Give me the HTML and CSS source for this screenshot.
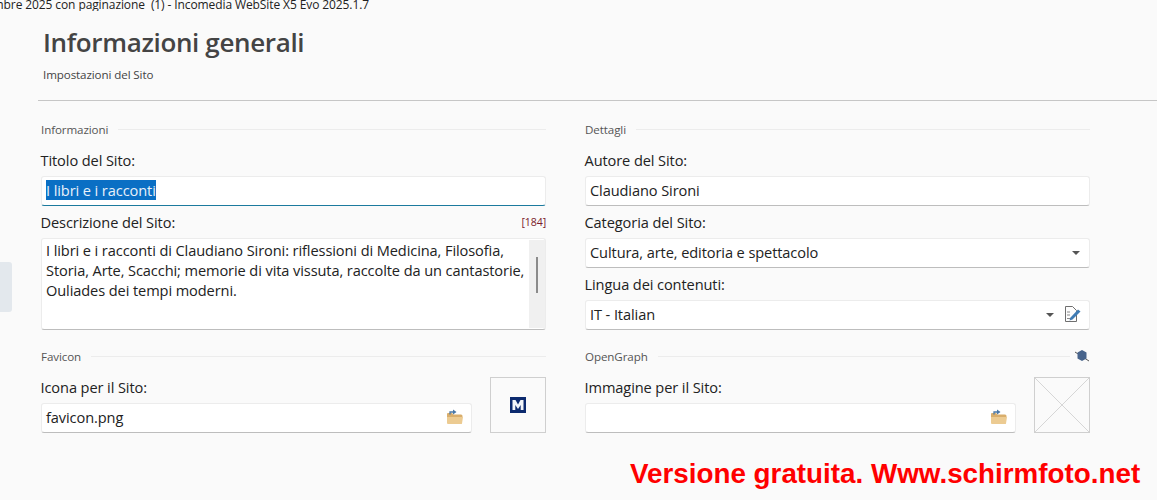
FILE: index.html
```html
<!DOCTYPE html>
<html lang="it">
<head>
<meta charset="utf-8">
<title>Informazioni generali</title>
<link rel="stylesheet" href="styles.css">
</head>
<body>
<div class="window-title"><span>Settembre 2025 con paginazione  (1) - Incomedia WebSite X5 Evo 2025.1.7</span></div>
<div class="side-tab"></div>
<header class="page-head">
  <h1>Informazioni generali</h1>
  <p>Impostazioni del Sito</p>
</header>
<main class="columns">
  <section class="column">
    <div class="group-head"><span>Informazioni</span><i></i></div>
    <div class="label label-first">Titolo del Sito:</div>
    <div class="field field-focus"><mark>I libri e i racconti</mark></div>
    <div class="label label-row"><span>Descrizione del Sito:</span><span class="counter">[184]</span></div>
    <div class="textarea">
      <div class="textarea-text">I libri e i racconti di Claudiano Sironi: riflessioni di Medicina, Filosofia,<br>Storia, Arte, Scacchi; memorie di vita vissuta, raccolte da un cantastorie,<br>Ouliades dei tempi moderni.</div>
      <div class="scrollbar"><b></b></div>
    </div>
    <div class="group-head group-second"><span>Favicon</span><i></i></div>
    <div class="picker">
      <div class="picker-main">
        <div class="label">Icona per il Sito:</div>
        <div class="field"><span class="grow">favicon.png</span>
          <svg class="folder" width="18" height="16" viewBox="0 0 18 16"><path d="M1 5q0-1 1-1h4l1.500 1.500H15q1.500 0 1.500 1.500v1H1z" fill="#d9ae6c"/><path d="M1 8h16l-1 6.500q0 .5-1 .5H2q-1 0-1-1z" fill="#eccb92"/><path d="M4 5.500V3h4" fill="none" stroke="#4a78a8" stroke-width="1.300"/><path d="M7 .5l3.500 2.500L7 5.500z" fill="#4a78a8"/></svg>
        </div>
      </div>
      <div class="preview">
        <svg width="16" height="16" viewBox="0 0 16 16"><rect width="16" height="16" fill="#0c2a6e"/><path d="M2.500 13V3h3L8 7.500 10.500 3h3v10h-2.800V8L8 12 5.300 8v5z" fill="#f3f5f8"/></svg>
      </div>
    </div>
  </section>
  <section class="column">
    <div class="group-head"><span>Dettagli</span><i></i></div>
    <div class="label label-first">Autore del Sito:</div>
    <div class="field">Claudiano Sironi</div>
    <div class="label label-row">Categoria del Sito:</div>
    <div class="field"><span class="grow">Cultura, arte, editoria e spettacolo</span><span class="caret caret-end"></span></div>
    <div class="label label-row">Lingua dei contenuti:</div>
    <div class="field"><span class="grow">IT - Italian</span><span class="caret"></span>
      <svg class="edit" width="18" height="18" viewBox="0 0 18 18"><path d="M1.500 1.500h7l4 4v11h-11z" fill="#fdfdfd" stroke="#6f6f6f"/><path d="M3 7h3M3 10h3M3 13.500h5" stroke="#8a8a8a"/><path d="M6.500 12.500l7.500-8 2.500 2-8 8-3 1z" fill="#3f7cb5"/></svg>
    </div>
    <div class="group-head group-second"><span>OpenGraph</span><i></i>
      <svg class="graph" width="16" height="14" viewBox="0 0 16 14"><path d="M1 3l14 9" stroke="#555" stroke-width="1"/><path d="M3.500 3.500L8 1l4.500 2.500v6L8 12 3.500 9.500z" fill="#48648c"/></svg>
    </div>
    <div class="picker">
      <div class="picker-main">
        <div class="label">Immagine per il Sito:</div>
        <div class="field"><span class="grow"></span>
          <svg class="folder" width="18" height="16" viewBox="0 0 18 16"><path d="M1 5q0-1 1-1h4l1.500 1.500H15q1.500 0 1.500 1.500v1H1z" fill="#d9ae6c"/><path d="M1 8h16l-1 6.500q0 .5-1 .5H2q-1 0-1-1z" fill="#eccb92"/><path d="M4 5.500V3h4" fill="none" stroke="#4a78a8" stroke-width="1.300"/><path d="M7 .5l3.500 2.500L7 5.500z" fill="#4a78a8"/></svg>
        </div>
      </div>
      <div class="preview preview-empty">
        <svg width="54" height="54" viewBox="0 0 54 54"><path d="M0 0l54 54M54 0L0 54" stroke="#d6d6d6"/></svg>
      </div>
    </div>
  </section>
</main>
<div class="watermark">Versione gratuita. Www.schirmfoto.net</div>
</body>
</html>
```
FILE: styles.css
```css
* { box-sizing: border-box; }
html, body { margin: 0; height: 500px; overflow: hidden; }
body {
  position: relative;
  background: #fafafa;
  color: #222;
  font-family: "Open Sans", "Noto Sans", sans-serif;
  font-size: 14.6px;
  letter-spacing: -0.1px;
}
.window-title {
  display: flex;
  justify-content: flex-end;
  width: 369px;
  height: 12px;
  line-height: 12px;
  margin-top: -1px;
  font-size: 12px;
  color: #222;
  white-space: pre;
  overflow: hidden;
}
.side-tab {
  position: absolute;
  left: 0;
  top: 262px;
  width: 12px;
  height: 50px;
  background: #e3e8ed;
  border-radius: 0 3px 3px 0;
}
.page-head {
  margin: 0 0 0 38px;
  padding: 13px 0 0 5px;
  height: 90px;
  border-bottom: 1px solid #c6c6c6;
}
.page-head h1 {
  margin: 0;
  font-size: 26px;
  line-height: 36px;
  font-weight: 600;
  color: #444;
  letter-spacing: -0.35px;
}
.page-head p {
  margin: 7px 0 0;
  font-size: 11.6px;
  line-height: 16px;
  color: #444;
}
.columns {
  display: grid;
  grid-template-columns: 505px 505px;
  column-gap: 39px;
  padding: 20px 0 0 41px;
}
.group-head {
  display: flex;
  align-items: center;
  gap: 10px;
  height: 16px;
  font-size: 11.6px;
  color: #555;
}
.group-head i { flex: 1; height: 1px; background: #ececec; }
.group-second { margin-top: 18px; }
.graph { margin-left: -6px; }
.label {
  height: 20px;
  line-height: 20px;
  color: #222;
  margin-left: -0.5px;
}
.label-first { margin-top: 13px; height: 26px; }
.label-row {
  display: flex;
  justify-content: space-between;
  margin-top: 6px;
  height: 26px;
  line-height: 20px;
}
.counter { font-size: 10.6px; color: #7a1a2a; }
.field {
  display: flex;
  align-items: center;
  height: 30px;
  padding: 0 4px 2px;
  background: #fff;
  border: 1px solid #ececec;
  border-bottom-color: #bdbdbd;
  border-radius: 3px;
  line-height: 20px;
}
.field-focus { border-bottom-color: #1c7a9e; }
mark { background: #0a6fc4; color: #e8f1fa; }
.grow { flex: 1; }
.textarea {
  display: flex;
  height: 92px;
  background: #fff;
  border: 1px solid #ececec;
  border-bottom-color: #bdbdbd;
  border-radius: 3px;
}
.textarea-text { flex: 1; padding: 1px 4px; line-height: 20px; white-space: nowrap; }
.scrollbar {
  width: 16px;
  margin: 1px 0;
  background: #f0f0f0;
  display: flex;
  justify-content: center;
  padding-top: 17px;
}
.scrollbar b { width: 2px; height: 36px; background: #8b8b8b; }
.picker {
  display: flex;
  gap: 18px;
  margin-top: 13px;
}
.picker-main { flex: 1; }
.picker-main .label { height: 26px; line-height: 20px; }
.preview {
  display: flex;
  align-items: center;
  justify-content: center;
  width: 56px;
  height: 56px;
  border: 1px solid #cfcfcf;
}
.preview-empty svg { display: block; }
.caret {
  width: 0;
  height: 0;
  margin: 2px 6px 0 0;
  border-left: 4px solid transparent;
  border-right: 4px solid transparent;
  border-top: 4px solid #555;
}
.caret-end { margin-right: 5px; }
.edit { margin-left: 4px; margin-right: 3px; }
.folder { margin-right: 3px; }
.watermark {
  position: absolute;
  left: 630px;
  top: 459px;
  font-family: "Liberation Sans", Arial, sans-serif;
  font-weight: 700;
  font-size: 27.8px;
  line-height: 30px;
  letter-spacing: 0;
  color: #f00;
  white-space: nowrap;
}
```
